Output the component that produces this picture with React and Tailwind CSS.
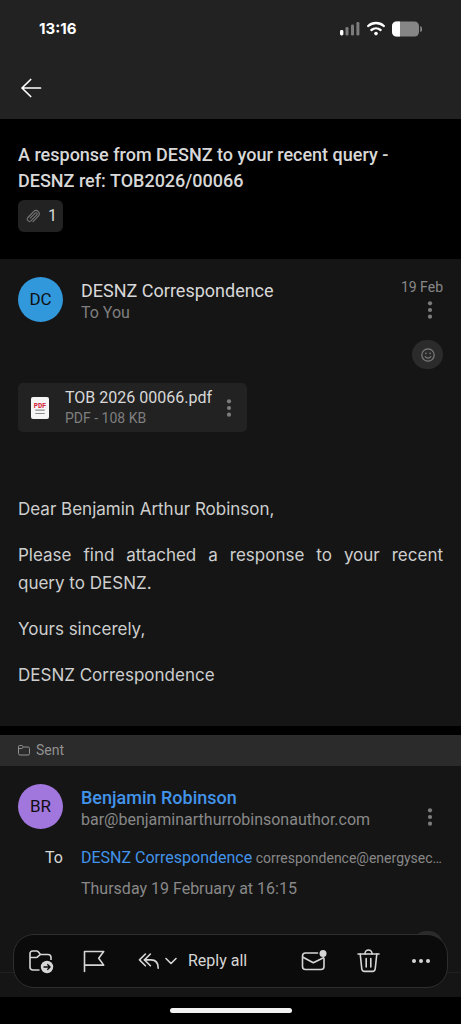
const StatusBar = () => (
    <div className="flex items-center justify-between px-[39px] h-[57px]">
        <span className="font-['Inter',sans-serif] text-[15px] font-bold leading-5 text-white">13:16</span>
        <div className="flex items-center gap-[7px]">
            {/* Signal */}
            <svg width="20" height="16" viewBox="0 0 20 16">
                <rect x="0" y="9" width="3.4" height="5.5" rx="1.4" fill="#fff" />
                <rect x="5.5" y="6" width="3" height="8.5" rx="1.3" fill="#7c7c7c" />
                <rect x="11" y="3.5" width="3" height="11" rx="1.3" fill="#7c7c7c" />
                <rect x="16.4" y="1" width="3" height="13.5" rx="1.3" fill="#7c7c7c" />
            </svg>
            {/* Wifi */}
            <svg width="18" height="16" viewBox="0 0 18 16" fill="none" stroke="#fff" strokeWidth="2.3">
                <path d="M1.2 5a11.6 11.6 0 0 1 15.6 0" strokeLinecap="round" />
                <path d="M4.4 9a7.2 7.2 0 0 1 9.2 0" strokeLinecap="round" />
                <circle cx="9" cy="12.6" r="1.8" fill="#fff" stroke="none" />
            </svg>
            {/* Battery */}
            <svg width="30" height="16" viewBox="0 0 30 16">
                <rect x="0" y="0.5" width="27" height="15" rx="4.5" fill="#868686" />
                <path d="M4.5 0.5H8v15H4.5A4.5 4.5 0 0 1 0 11V5A4.5 4.5 0 0 1 4.5 0.5z" fill="#fff" />
                <path d="M28.2 5a3.2 3.2 0 0 1 0 6z" fill="#868686" />
            </svg>
        </div>
    </div>
);

const MoreVertical = ({ label }) => (
    <button type="button" aria-label={label} className="flex items-center justify-center w-4 h-5 text-[#7c7c7c]">
        <svg width="6" height="18" viewBox="0 0 6 18" fill="currentColor">
            <circle cx="3" cy="2.3" r="2.1" />
            <circle cx="3" cy="9" r="2.1" />
            <circle cx="3" cy="15.7" r="2.1" />
        </svg>
    </button>
);

const Avatar = ({ initials, className }) => (
    <div className={`flex shrink-0 items-center justify-center w-[45px] h-[45px] rounded-full text-[17px] text-[#101010] ${className}`}>
        {initials}
    </div>
);

const PdfIcon = () => (
    <svg width="20" height="24" viewBox="0 0 20 24">
        <rect x="1" y="1" width="18" height="22" rx="2" fill="#f5f5f5" />
        <text x="10" y="11.5" textAnchor="middle" fill="#d3203b" className="font-['Liberation_Mono',monospace] text-[7px] font-bold">PDF</text>
        <path d="M5.3 14.2h9.4M5.3 17.5h9.4" stroke="#8b8b8b" strokeWidth="1.2" />
    </svg>
);

const ReplyToolbar = () => (
    <div className="flex items-center h-[54px] rounded-[21px] border border-[#2e2e2e] bg-[#0b0b0b] pl-[13px] pr-4 text-[#d6d6d6]">
        <button type="button" aria-label="Move to folder">
            <svg width="28" height="26" viewBox="0 0 28 26" fill="none" stroke="currentColor" strokeWidth="1.6" strokeLinejoin="round">
                <path d="M12.5 22H6a3 3 0 0 1-3-3V5.5A2.5 2.5 0 0 1 5.500 3h4.200a2 2 0 0 1 1.500.700L13.500 6.500H21a3 3 0 0 1 3 3v2.600" />
                <path d="M3 9.500h6.200a2 2 0 0 0 1.600-.8L13.300 6.500" />
                <circle cx="20" cy="19" r="6.200" fill="currentColor" stroke="none" />
                <path d="M16.500 19h6.600M20.300 16.200l2.800 2.800-2.800 2.800" stroke="#0b0b0b" strokeWidth="1.3" />
            </svg>
        </button>
        <button type="button" aria-label="Flag" className="ml-[26px]">
            <svg width="26" height="26" viewBox="0 0 26 26" fill="none" stroke="currentColor" strokeWidth="1.6" strokeLinejoin="round" strokeLinecap="round">
                <path d="M3.500 23.500V3.500h19.200l-5 6.800 5 6.800H3.500" />
            </svg>
        </button>
        <button type="button" className="flex items-center ml-[31px] text-[16px] leading-5">
            <svg width="22" height="20" viewBox="0 0 22 20" fill="none" stroke="currentColor" strokeWidth="1.6" strokeLinejoin="round" strokeLinecap="round">
                <path d="M7.400 3 1.500 8.900l5.900 5.900" />
                <path d="M12.400 3 6.500 8.900l5.900 5.900" />
                <path d="M6.500 8.900H13c4.600 0 7.200 3 7.200 8.300" />
            </svg>
            <svg width="12" height="8" viewBox="0 0 12 8" className="ml-[5px]" fill="none" stroke="currentColor" strokeWidth="1.6" strokeLinejoin="round" strokeLinecap="round">
                <path d="M1 1.500l5 5 5-5" />
            </svg>
            <span className="ml-[11px]">Reply all</span>
        </button>
        <div className="flex items-center justify-between ml-auto w-[130px]">
            <button type="button" aria-label="Mark as unread">
                <svg width="26" height="26" viewBox="0 0 26 26" fill="none" stroke="currentColor" strokeWidth="1.6" strokeLinejoin="round" strokeLinecap="round">
                    <path d="M16.500 5H4.500a3 3 0 0 0-3 3v10.500a3 3 0 0 0 3 3H20a3 3 0 0 0 3-3v-8" />
                    <path d="M2 9.300l10.300 5.400 10.200-5" />
                    <circle cx="22" cy="5.500" r="3.500" fill="currentColor" stroke="none" />
                </svg>
            </button>
            <button type="button" aria-label="Delete">
                <svg width="24" height="26" viewBox="0 0 24 26" fill="none" stroke="currentColor" strokeWidth="1.6" strokeLinejoin="round" strokeLinecap="round">
                    <path d="M1 6h21" />
                    <path d="M8 6v-.500a3.500 3.500 0 0 1 7 0V6" />
                    <path d="M3.200 6l1.600 15a2.700 2.700 0 0 0 2.700 2.400h8a2.700 2.700 0 0 0 2.700-2.400L19.800 6" />
                    <path d="M9.200 10.500V19M13.800 10.500V19" />
                </svg>
            </button>
            <button type="button" aria-label="More actions">
                <svg width="20" height="6" viewBox="0 0 20 6" fill="currentColor">
                    <circle cx="3" cy="3" r="2" />
                    <circle cx="10" cy="3" r="2" />
                    <circle cx="17" cy="3" r="2" />
                </svg>
            </button>
        </div>
    </div>
);

const App = () => {
    return (
        <div className="relative flex flex-col min-h-screen bg-black font-['Roboto',sans-serif] text-[#d8d8d8]">

            {/* Header */}
            <header className="bg-[#222222] pb-4">
                <StatusBar />
                <div className="flex items-center h-[46px] pt-[15px] pl-5">
                    <button type="button" aria-label="Back" className="text-white">
                        <svg width="22" height="20" viewBox="0 0 22 20" fill="none" stroke="currentColor" strokeWidth="1.7" strokeLinecap="round" strokeLinejoin="round">
                            <path d="M20.500 10H2M10.700 1.500L2 10l8.700 8.500" />
                        </svg>
                    </button>
                </div>
            </header>

            {/* Subject */}
            <div className="px-[18px] pt-[23px] pb-[27px]">
                <h1 className="text-[18px] font-medium leading-[26px]">
                    A response from DESNZ to your recent query - DESNZ ref: TOB2026/00066
                </h1>
                <button type="button" aria-label="1 attachment" className="flex items-center gap-2 mt-[6px] h-8 rounded-md bg-[#222222] px-2 text-[16px]">
                    <svg width="14" height="16" viewBox="0 0 14 16" fill="none" stroke="#777" strokeWidth="1.1" strokeLinecap="round">
                        <path d="M4.200 10.200l4.900-5a1.200 1.200 0 0 1 1.700 1.700l-5.600 5.800a2.300 2.300 0 0 1-3.300-3.200l5.900-6.100a3.300 3.300 0 0 1 4.700 4.600L7 13.700" />
                    </svg>
                    <span className="w-[7px]">1</span>
                </button>
            </div>

            {/* Received message */}
            <article className="bg-[#151515] px-[18px] pt-[18px] pb-[37px]">
                <div className="flex">
                    <Avatar initials="DC" className="bg-[#3298dc]" />
                    <div className="flex-1 ml-[18px] pt-[3px] leading-[22px]">
                        <p className="text-[18px]">DESNZ Correspondence</p>
                        <p className="text-[16px] text-[#7f7f7f]">To You</p>
                    </div>
                    <div className="flex flex-col items-end">
                        <time className="text-[14px] leading-5 text-[#888888]">19 Feb</time>
                        <div className="pr-[5px] pt-[3px]">
                            <MoreVertical label="Message options" />
                        </div>
                    </div>
                </div>

                <div className="flex justify-end mt-4">
                    <button type="button" aria-label="Add reaction" className="flex items-center justify-center w-[31px] h-[29px] rounded-full bg-[#2b2b2b]">
                        <svg width="14" height="14" viewBox="0 0 14 14" fill="none" stroke="#7c7c7c" strokeWidth="1.2" strokeLinecap="round">
                            <circle cx="7" cy="7" r="6.2" />
                            <path d="M4.200 8.700a3.400 3.400 0 0 0 5.600 0" />
                            <circle cx="4.9" cy="5.400" r="0.8" fill="#7c7c7c" stroke="none" />
                            <circle cx="9.1" cy="5.400" r="0.8" fill="#7c7c7c" stroke="none" />
                        </svg>
                    </button>
                </div>

                {/* Attachment */}
                <div className="flex items-center mt-[14px] w-[229px] h-[49px] rounded-[5px] bg-[#222222] pl-3">
                    <PdfIcon />
                    <div className="flex-1 ml-[15px] whitespace-nowrap leading-5">
                        <p className="text-[16px]">TOB 2026 00066.pdf</p>
                        <p className="text-[14px] text-[#7f7f7f]">PDF - 108 KB</p>
                    </div>
                    <div className="pr-[10px]">
                        <MoreVertical label="Attachment options" />
                    </div>
                </div>

                <div className="flex flex-col gap-[18px] mt-[63px] font-['Inter',sans-serif] text-[17px] leading-7 text-[#cecece]">
                    <p>Dear Benjamin Arthur Robinson,</p>
                    <p className="text-justify">
                        Please find attached a response to your recent query to DESNZ.
                    </p>
                    <p>Yours sincerely,</p>
                    <p>DESNZ Correspondence</p>
                </div>
            </article>

            {/* Sent message */}
            <article className="mt-[9px] flex-1 bg-[#151515]">
                <div className="flex items-center gap-[6px] h-[31px] bg-[#2b2b2b] px-[18px] text-[14px] text-[#919191]">
                    <svg width="12" height="11" viewBox="0 0 12 11" fill="none" stroke="currentColor" strokeWidth="1" strokeLinejoin="round">
                        <path d="M.500 8.500v-7a1 1 0 0 1 1-1h2.400L5.600 2H10a1.500 1.500 0 0 1 1.500 1.500v5A1.500 1.500 0 0 1 10 10H2A1.500 1.500 0 0 1 .500 8.500zM.500 3.500h3.300L5.600 2" />
                    </svg>
                    Sent
                </div>

                <div className="px-[18px] pt-[18px]">
                    <div className="flex">
                        <Avatar initials="BR" className="bg-[#a177dd]" />
                        <div className="flex-1 ml-[18px] pt-[3px] min-w-0 leading-[22px]">
                            <p className="text-[18px] font-medium text-[#4294ea]">Benjamin Robinson</p>
                            <p className="text-[16px] text-[#888888]">bar@benjaminarthurrobinsonauthor.com</p>
                        </div>
                        <div className="pr-[5px] pt-[23px]">
                            <MoreVertical label="Message options" />
                        </div>
                    </div>

                    <div className="flex items-baseline mt-4 leading-[22px]">
                        <span className="w-[45px] text-right text-[16px]">To</span>
                        <p className="flex-1 ml-[18px] whitespace-nowrap text-[14px] text-[#888888]">
                            <a href="#desnz" className="text-[16px] text-[#4294ea]">DESNZ Correspondence</a>{" "}
                            correspondence@energysec…
                        </p>
                    </div>
                    <time className="block ml-[63px] mt-[9px] text-[16px] leading-[22px] text-[#888888]">
                        Thursday 19 February at 16:15
                    </time>

                    <div className="flex justify-end mt-[31px]">
                        <div className="w-[31px] h-[29px] rounded-full bg-[#2b2b2b]"></div>
                    </div>
                </div>
                <div className="mt-3 border-t border-[#202020]"></div>
            </article>

            {/* Floating actions and home indicator */}
            <div className="fixed inset-x-0 bottom-0">
                <div className="px-[13px] pb-[9px]">
                    <ReplyToolbar />
                </div>
                <div className="flex justify-center h-[27px] bg-black pt-[11px]">
                    <div className="w-[122px] h-[5px] rounded-full bg-[#f2f2f2]"></div>
                </div>
            </div>
        </div>
    );
};

export default App;
